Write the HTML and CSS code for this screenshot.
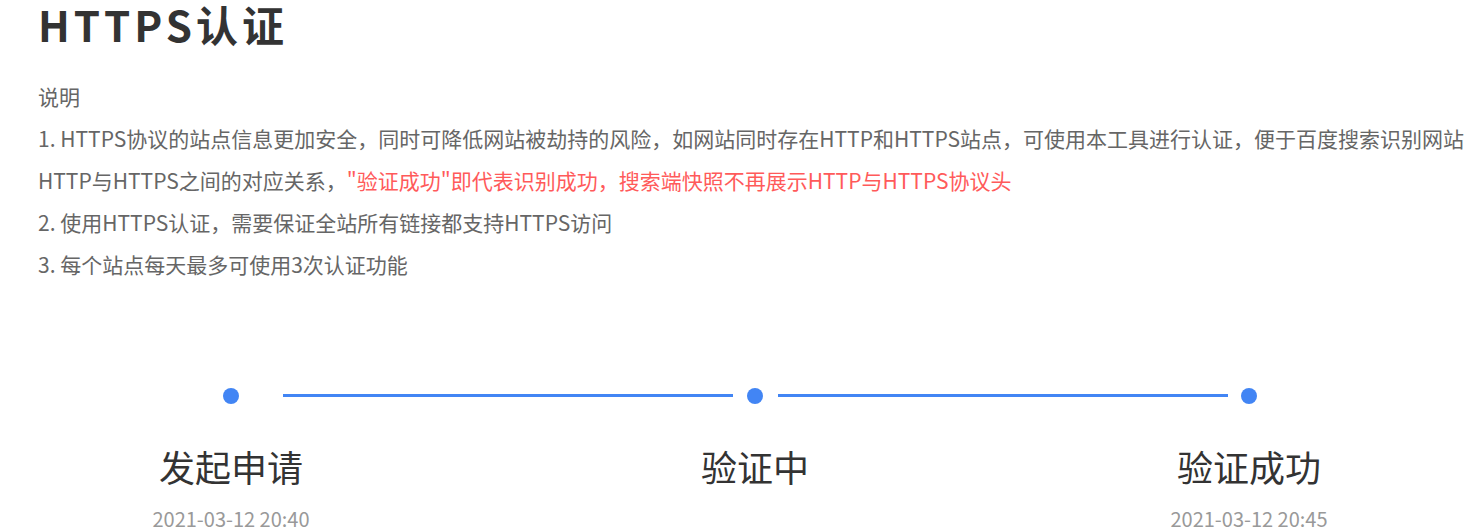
FILE: index.html
```html
<!DOCTYPE html>
<html lang="zh-CN">
<head>
<meta charset="utf-8">
<title>HTTPS认证</title>
<link rel="stylesheet" href="styles.css">
</head>
<body>
<div class="page">
  <h1 class="title">HTTPS认证</h1>
  <div class="desc">
    <p class="line">说明</p>
    <p class="line">1. HTTPS协议的站点信息更加安全，同时可降低网站被劫持的风险，如网站同时存在HTTP和HTTPS站点，可使用本工具进行认证，便于百度搜索识别网站HTTP与HTTPS之间的对应关系，<span class="red">"验证成功"即代表识别成功，搜索端快照不再展示HTTP与HTTPS协议头</span></p>
    <p class="line">2. 使用HTTPS认证，需要保证全站所有链接都支持HTTPS访问</p>
    <p class="line">3. 每个站点每天最多可使用3次认证功能</p>
  </div>
  <div class="steps">
    <div class="step step-first">
      <span class="dot"></span>
      <span class="label">发起申请</span>
      <span class="date">2021-03-12 20:40</span>
    </div>
    <span class="connector connector-a"></span>
    <div class="step step-mid">
      <span class="dot"></span>
      <span class="label">验证中</span>
    </div>
    <span class="connector connector-b"></span>
    <div class="step step-last">
      <span class="dot"></span>
      <span class="label">验证成功</span>
      <span class="date">2021-03-12 20:45</span>
    </div>
  </div>
</div>
</body>
</html>
```
FILE: styles.css
```css
* { box-sizing: border-box; }
html, body { margin: 0; padding: 0; background: #fff; }
body {
  font-family: "Noto Sans CJK SC", "Noto Sans", sans-serif;
  overflow: hidden;
  text-autospace: no-autospace;
}
.page {
  padding: 0 0 0 38px;
}
.title {
  margin: 0;
  font-size: 42px;
  line-height: 48px;
  font-weight: 700;
  letter-spacing: 4px;
  color: #333;
}
.desc {
  margin-top: 27px;
  font-size: 21px;
  line-height: 42px;
  color: #666;
}
.line { margin: 0; }
.red { color: #ff5a5a; }
.steps {
  display: flex;
  align-items: flex-start;
  margin-top: 103px;
  margin-left: 177px;
}
.step {
  width: 32px;
  display: flex;
  flex-direction: column;
  align-items: center;
  flex: none;
}
.dot {
  width: 16px;
  height: 16px;
  border-radius: 50%;
  background: #4285f4;
}
.label {
  margin-top: 40px;
  font-size: 36px;
  line-height: 44px;
  color: #333;
  white-space: nowrap;
}
.date {
  margin-top: 17px;
  font-size: 20px;
  line-height: 28px;
  color: #999;
  white-space: nowrap;
}
.connector {
  flex: none;
  width: 450px;
  height: 3px;
  margin-top: 6px;
  background: #4285f4;
}
.connector-a { margin-left: 36px; margin-right: 6px; }
.connector-b { margin-left: 7px; margin-right: 5px; }
```
